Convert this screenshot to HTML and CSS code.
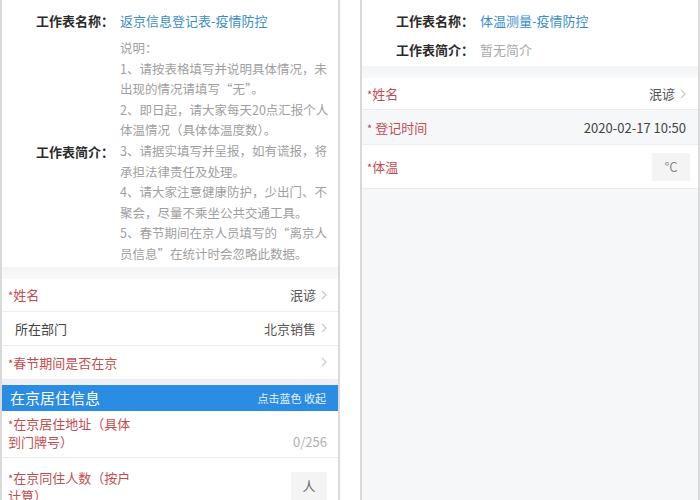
FILE: index.html
```html
<!DOCTYPE html>
<html lang="zh-CN">
<head>
<meta charset="utf-8">
<link rel="stylesheet" href="styles.css">
</head>
<body>
<div class="screens">
  <section class="panel">
    <div class="info">
      <div class="info-row">
        <span class="info-label">工作表名称：</span>
        <span class="info-value link">返京信息登记表-疫情防控</span>
      </div>
      <div class="info-row info-desc">
        <span class="info-label">工作表简介：</span>
        <div class="desc">
          <div>说明：</div>
          <div>1、请按表格填写并说明具体情况，未</div>
          <div>出现的情况请填写“无”。</div>
          <div>2、即日起，请大家每天20点汇报个人</div>
          <div>体温情况（具体体温度数）。</div>
          <div>3、请据实填写并呈报，如有谎报，将</div>
          <div>承担法律责任及处理。</div>
          <div>4、请大家注意健康防护，少出门、不</div>
          <div>聚会，尽量不乘坐公共交通工具。</div>
          <div>5、春节期间在京人员填写的“离京人</div>
          <div>员信息”在统计时会忽略此数据。</div>
        </div>
      </div>
    </div>
    <div class="band"></div>
    <div class="field first">
      <span class="field-label req">姓名</span>
      <span class="field-value">泯谚<svg class="chev" viewBox="0 0 6 10"><polyline points="1,1 5,5 1,9"/></svg></span>
    </div>
    <div class="field">
      <span class="field-label plain">所在部门</span>
      <span class="field-value">北京销售<svg class="chev" viewBox="0 0 6 10"><polyline points="1,1 5,5 1,9"/></svg></span>
    </div>
    <div class="field">
      <span class="field-label req">春节期间是否在京</span>
      <span class="field-value"><svg class="chev" viewBox="0 0 6 10"><polyline points="1,1 5,5 1,9"/></svg></span>
    </div>
    <div class="gap"></div>
    <div class="group-bar">
      <span class="group-title">在京居住信息</span>
      <span class="group-action">点击蓝色 收起</span>
    </div>
    <div class="field tall">
      <span class="field-label req wrap">在京居住地址（具体到门牌号）</span>
      <span class="field-value counter">0/256</span>
    </div>
    <div class="field tall tall-2">
      <span class="field-label req wrap">在京同住人数（按户计算）</span>
      <span class="unit-box">人</span>
    </div>
  </section>

  <section class="panel panel-right">
    <div class="info">
      <div class="info-row">
        <span class="info-label">工作表名称：</span>
        <span class="info-value link">体温测量-疫情防控</span>
      </div>
      <div class="info-row">
        <span class="info-label">工作表简介：</span>
        <span class="info-value muted">暂无简介</span>
      </div>
    </div>
    <div class="band"></div>
    <div class="field small">
      <span class="field-label req">姓名</span>
      <span class="field-value">泯谚<svg class="chev" viewBox="0 0 6 10"><polyline points="1,1 5,5 1,9"/></svg></span>
    </div>
    <div class="field small grey">
      <span class="field-label req spaced">登记时间</span>
      <span class="field-value date">2020-02-17 10:50</span>
    </div>
    <div class="field small input-row">
      <span class="field-label req">体温</span>
      <span class="unit-box unit-c">°C</span>
    </div>
  </section>
</div>
</body>
</html>
```

FILE: styles.css
```css
html, body {
  margin: 0;
  padding: 0;
  background: #ffffff;
}

body {
  font-family: "Noto Sans CJK SC", "Noto Sans", "Liberation Sans", sans-serif;
  color: #333;
  font-size: 13px;
}

.screens {
  display: flex;
  gap: 20px;
  width: 700px;
  height: 500px;
  overflow: hidden;
}

.panel {
  width: 336px;
  height: 500px;
  border-left: 2px solid #d9d9d9;
  border-right: 2px solid #d9d9d9;
  background: #ffffff;
  overflow: hidden;
  display: flex;
  flex-direction: column;
}

.panel-right {
  background: #f6f7f9;
}

.info {
  background: #ffffff;
  padding: 6px 0 2px;
}

.info-row {
  display: flex;
  line-height: 29px;
}

.info-label {
  width: 112px;
  flex: none;
  text-align: right;
  font-weight: bold;
  color: #2b2b2b;
  font-size: 13px;
}

.info-value {
  margin-left: 6px;
  font-size: 13px;
}

.link {
  color: #3a8dc8;
}

.muted {
  color: #a8a8a8;
}

.info-desc {
  align-items: center;
  margin-top: 3px;
}

.desc {
  margin-left: 6px;
  font-size: 12.5px;
  line-height: 20.6px;
  color: #a0a0a0;
  white-space: nowrap;
}

.band {
  height: 12px;
  flex: none;
  background: linear-gradient(#f3f4f6, #f8f9fa);
}

.field {
  display: flex;
  align-items: center;
  justify-content: space-between;
  height: 34px;
  flex: none;
  padding: 0 11px 0 6px;
  background: #ffffff;
  border-bottom: 1px solid #ececec;
  box-sizing: border-box;
}

.first {
  height: 33px;
}

.field-label {
  font-size: 13px;
}

.req {
  color: #c24d50;
}

.req::before {
  content: "*";
  color: #d0393d;
  font-size: 11px;
}

.spaced::before {
  margin-right: 3px;
}

.plain {
  color: #444;
  padding-left: 7px;
}

.field-value {
  display: flex;
  align-items: center;
  color: #555;
  font-size: 13px;
}

.chev {
  width: 6px;
  height: 10px;
  margin-left: 5px;
  fill: none;
  stroke: #c8c8c8;
  stroke-width: 1.2;
}

.gap {
  height: 5px;
  flex: none;
  background: #eef0f3;
}

.group-bar {
  display: flex;
  align-items: center;
  justify-content: space-between;
  height: 26px;
  flex: none;
  padding: 0 12px 0 8px;
  background: #2a8ce3;
  color: #ffffff;
}

.group-title {
  font-size: 15px;
}

.group-action {
  font-size: 11px;
  color: #e8f3ff;
}

.tall {
  height: 47px;
  align-items: stretch;
  padding-top: 4px;
  padding-bottom: 6px;
}

.tall-2 {
  height: 60px;
  padding-top: 11px;
}

.wrap {
  width: 128px;
  line-height: 18px;
}

.counter {
  align-self: flex-end;
  color: #b0b0b0;
  line-height: 18px;
}

.unit-box {
  display: flex;
  align-items: center;
  justify-content: center;
  width: 36px;
  height: 28px;
  background: #f4f4f4;
  color: #666;
  font-size: 13px;
  margin-top: 3px;
}

.small {
  height: 32px;
  padding: 0 12px 0 5px;
}

.grey {
  height: 35px;
  background: #f6f7f9;
}

.date {
  color: #444;
}

.input-row {
  height: 44px;
  padding-right: 8px;
}

.unit-c {
  margin-top: 0;
  width: 38px;
  color: #888;
}
```
